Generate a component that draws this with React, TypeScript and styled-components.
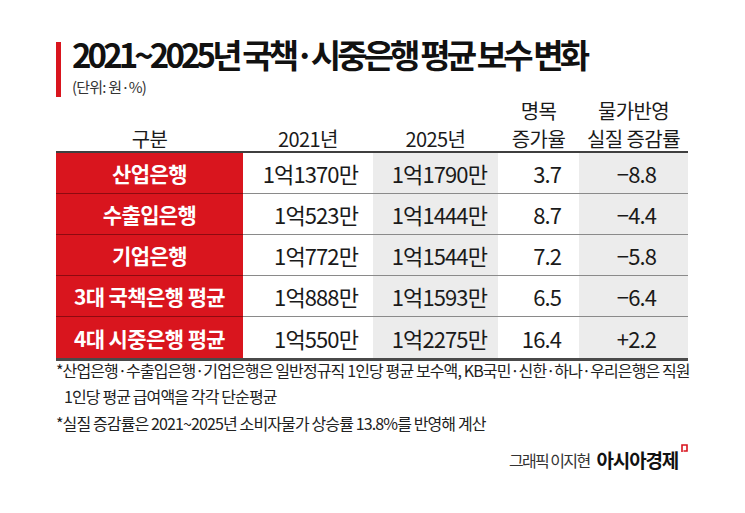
import React from "react";
import styled, { createGlobalStyle } from "styled-components";

const GlobalStyle = createGlobalStyle`
  html, body { margin: 0; padding: 0; background: #ffffff; }
  body { font-family: "Noto Sans CJK KR", "Noto Sans", sans-serif; color: #1a1a1a; }
`;

const RED = "#d9151e";
const GRAY_BG = "#ececec";

const Page = styled.div`
  width: 745px;
  height: 513px;
  box-sizing: border-box;
  padding: 34px 57px 0 56px;
  background: #fff;
`;

const TitleBlock = styled.div`
  display: flex;
  gap: 11px;
`;

const Bar = styled.div`
  width: 5px;
  height: 55px;
  margin-top: 8px;
  background: ${RED};
  flex: none;
`;

const TitleText = styled.div`
  display: flex;
  flex-direction: column;
`;

const Title = styled.h1`
  margin: 0;
  font-size: 33px;
  line-height: 40px;
  font-weight: 700;
  letter-spacing: -3.9px;
  color: #111;
  white-space: nowrap;
`;

const Unit = styled.div`
  margin-top: 3px;
  font-size: 15px;
  line-height: 20px;
  letter-spacing: -0.8px;
  color: #333;
`;

const COLS = "187px 130px 125px 81px 109px";

const HeaderRow = styled.div`
  display: grid;
  grid-template-columns: ${COLS};
  height: 56px;
  align-items: end;
  padding-bottom: 2px;
  box-sizing: border-box;
  border-bottom: 2px solid #3f3f3f;
`;

const HeadCell = styled.div`
  text-align: center;
  font-size: 20px;
  line-height: 28px;
  letter-spacing: -0.6px;
  color: #1a1a1a;
`;

const Row = styled.div<{ $last?: boolean }>`
  display: grid;
  grid-template-columns: ${COLS};
  height: 41px;
  border-bottom: ${(p) => (p.$last ? "3px solid #4a4a4a" : "none")};
`;

const NameCell = styled.div<{ $last?: boolean }>`
  background: ${RED};
  color: #fff;
  font-weight: 700;
  font-size: 21px;
  letter-spacing: -0.6px;
  display: flex;
  align-items: center;
  justify-content: center;
  border-bottom: ${(p) => (p.$last ? "none" : "1px solid #8e0a10")};
`;

const ValueCell = styled.div<{ $gray?: boolean; $pr: number; $last?: boolean }>`
  background: ${(p) => (p.$gray ? GRAY_BG : "#fff")};
  font-size: 22px;
  letter-spacing: -0.9px;
  color: #1a1a1a;
  display: flex;
  align-items: center;
  justify-content: flex-end;
  padding-right: ${(p) => p.$pr}px;
  border-bottom: ${(p) => (p.$last ? "none" : "1px solid #8a8a8a")};
`;

const Notes = styled.div`
  margin-top: -4px;
  font-size: 16px;
  letter-spacing: -0.88px;
  color: #222;
  white-space: nowrap;
`;

const Note = styled.p<{ $indent?: boolean; $gap?: number }>`
  margin: ${(p) => p.$gap ?? 0}px 0 0 0;
  line-height: 26px;
  padding-left: ${(p) => (p.$indent ? 8 : 0)}px;
`;

const Credit = styled.div`
  margin-top: 10px;
  display: flex;
  justify-content: flex-end;
  align-items: center;
  gap: 7px;
`;

const Artist = styled.span`
  font-size: 16px;
  letter-spacing: -1.6px;
  color: #333;
`;

const Brand = styled.span`
  display: inline-flex;
  align-items: flex-start;
  gap: 3px;
  font-size: 19px;
  font-weight: 700;
  letter-spacing: -1.2px;
  color: #111;
`;

const Mark = styled.svg`
  margin-top: -2px;
  flex: none;
`;

const rows = [
  ["산업은행", "1억1370만", "1억1790만", "3.7", "−8.8"],
  ["수출입은행", "1억523만", "1억1444만", "8.7", "−4.4"],
  ["기업은행", "1억772만", "1억1544만", "7.2", "−5.8"],
  ["3대 국책은행 평균", "1억888만", "1억1593만", "6.5", "−6.4"],
  ["4대 시중은행 평균", "1억550만", "1억2275만", "16.4", "+2.2"],
];

export default function App() {
  return (
    <>
      <GlobalStyle />
      <Page>
        <TitleBlock>
          <Bar />
          <TitleText>
            <Title>2021~2025년 국책·시중은행 평균 보수 변화</Title>
            <Unit>(단위: 원·%)</Unit>
          </TitleText>
        </TitleBlock>

        <HeaderRow>
          <HeadCell>구분</HeadCell>
          <HeadCell>2021년</HeadCell>
          <HeadCell>2025년</HeadCell>
          <HeadCell>
            명목
            <br />
            증가율
          </HeadCell>
          <HeadCell>
            물가반영
            <br />
            실질 증감률
          </HeadCell>
        </HeaderRow>

        {rows.map((r, i) => {
          const last = i === rows.length - 1;
          return (
            <Row key={r[0]} $last={last}>
              <NameCell $last={last}>{r[0]}</NameCell>
              <ValueCell $pr={15} $last={last}>{r[1]}</ValueCell>
              <ValueCell $gray $pr={11} $last={last}>{r[2]}</ValueCell>
              <ValueCell $pr={18} $last={last}>{r[3]}</ValueCell>
              <ValueCell $gray $pr={32} $last={last}>{r[4]}</ValueCell>
            </Row>
          );
        })}

        <Notes>
          <Note>
            *산업은행·수출입은행·기업은행은 일반정규직 1인당 평균 보수액, KB국민·신한·하나·우리은행은 직원
          </Note>
          <Note $indent>1인당 평균 급여액을 각각 단순평균</Note>
          <Note $gap={1}>*실질 증감률은 2021~2025년 소비자물가 상승률 13.8%를 반영해 계산</Note>
        </Notes>

        <Credit>
          <Artist>그래픽 이지현</Artist>
          <Brand>
            아시아경제
            <Mark width="7" height="9" viewBox="0 0 7 9">
              <path d="M1 8 V1 H6 V7 H2.5" fill="none" stroke={RED} strokeWidth="1.6" />
            </Mark>
          </Brand>
        </Credit>
      </Page>
    </>
  );
}
